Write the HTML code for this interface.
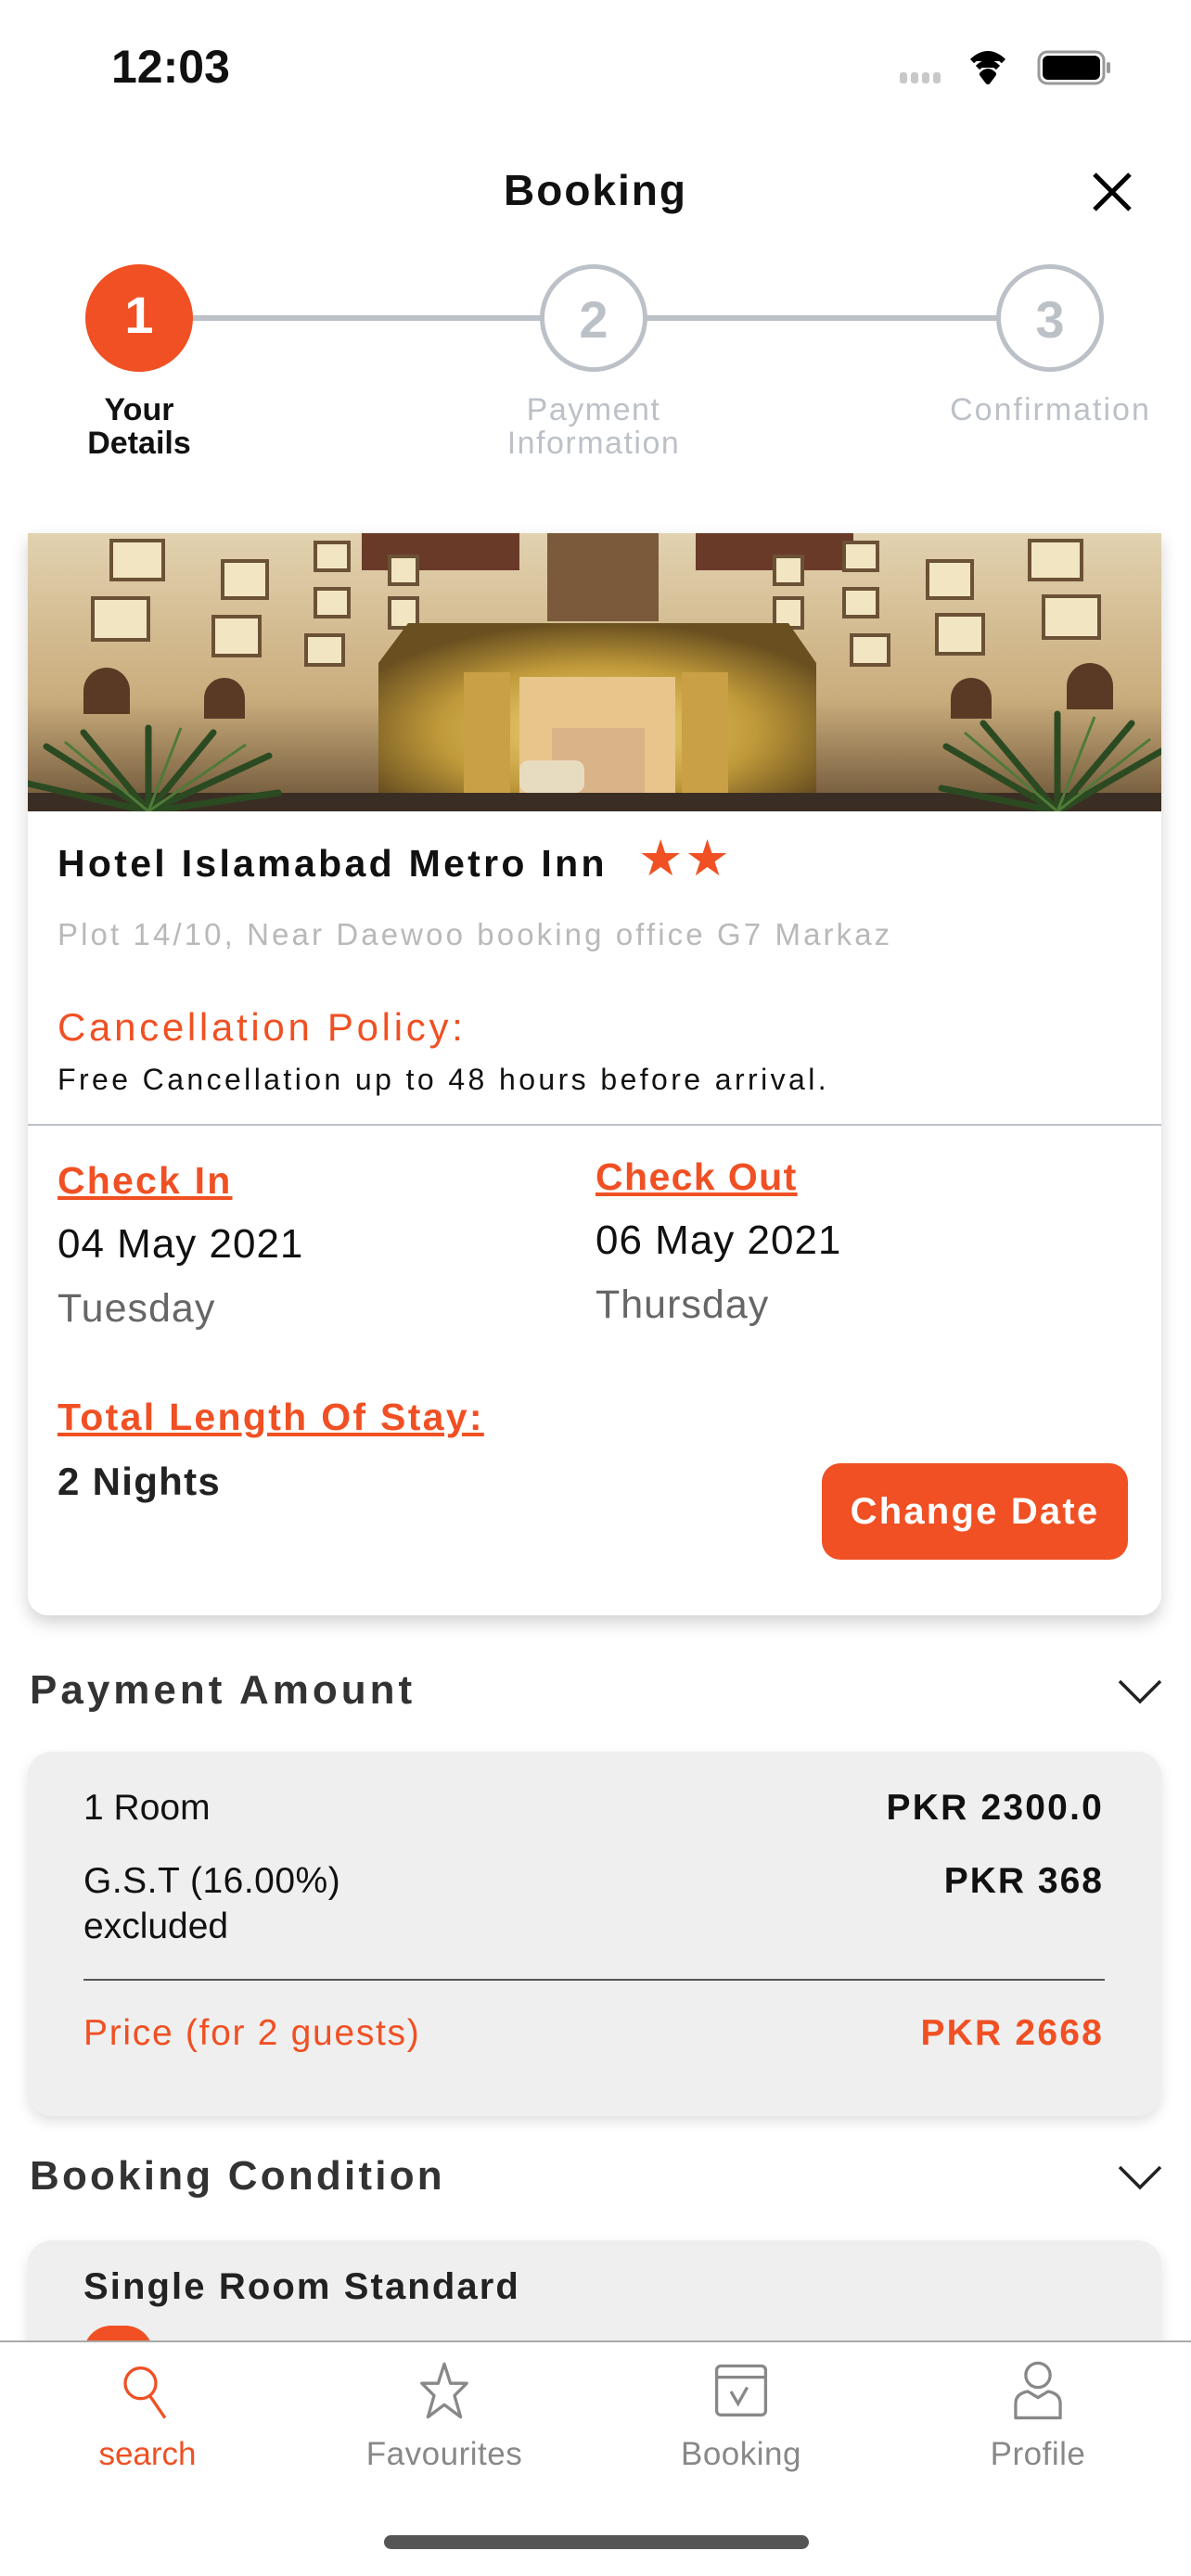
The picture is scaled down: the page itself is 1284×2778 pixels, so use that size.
<!DOCTYPE html>
<html><head><meta charset="utf-8"><style>
*{margin:0;padding:0;box-sizing:border-box}
body{width:1284px;height:2778px;background:#fff;position:relative;overflow:hidden;font-family:"Liberation Sans",sans-serif;color:#111}
.t{position:absolute;white-space:nowrap}
.or{color:#f05023}
.card{position:absolute;left:30px;top:575px;width:1222px;height:1167px;background:#fff;border-radius:0 0 22px 22px;box-shadow:0 8px 18px rgba(0,0,0,.18)}
.gcard{position:absolute;left:30px;width:1222px;background:#efefef;border-radius:26px;box-shadow:0 6px 14px rgba(0,0,0,.12)}
.circ{position:absolute;width:116px;height:116px;border-radius:50%;top:285px;text-align:center;line-height:110px;font-size:56px;font-weight:bold}
</style></head><body>
<div class="t" style="left:120px;top:44px;font-size:50px;line-height:56px;font-weight:bold;letter-spacing:0px">12:03</div>
<svg style="position:absolute;left:970px;top:50px" width="230" height="44" viewBox="0 0 230 44">
<g fill="#c8c8c8"><rect x="0" y="28" width="8" height="12" rx="3"/><rect x="12" y="28" width="8" height="12" rx="3"/><rect x="24" y="28" width="8" height="12" rx="3"/><rect x="36" y="28" width="8" height="12" rx="3"/></g>
<path d="M78 16 Q95 0 112 16 M84 23 Q95 12 106 23 M89 30 L95 38 L101 30 Q95 24 89 30Z" stroke="#000" stroke-width="6" fill="#000" stroke-linejoin="round"/>
<rect x="150" y="6" width="70" height="34" rx="9" fill="none" stroke="#999" stroke-width="3"/>
<rect x="154" y="10" width="62" height="26" rx="6" fill="#000"/>
<rect x="223" y="17" width="4" height="12" rx="2" fill="#999"/>
</svg>
<div class="t" style="left:0;width:1284px;text-align:center;top:180px;font-size:46px;line-height:50px;font-weight:bold;letter-spacing:2px">Booking</div>
<svg style="position:absolute;left:1176px;top:184px" width="46" height="46"><path d="M4 4L42 42M42 4L4 42" stroke="#000" stroke-width="5"/></svg>
<div style="position:absolute;left:200px;top:340px;width:880px;height:6px;background:#bcc1c8"></div>
<div class="circ" style="left:92px;background:#f05023;color:#fff">1</div>
<div class="circ" style="left:582px;border:5px solid #bcc1c8;color:#bcc1c8;background:#fff">2</div>
<div class="circ" style="left:1074px;border:5px solid #bcc1c8;color:#bcc1c8;background:#fff">3</div>
<div class="t" style="left:50px;width:200px;text-align:center;top:424px;font-size:34px;line-height:36px;font-weight:bold">Your<br>Details</div>
<div class="t" style="left:470px;width:340px;text-align:center;top:424px;font-size:34px;line-height:36px;color:#bcc1c8;letter-spacing:1.5px">Payment<br>Information</div>
<div class="t" style="left:990px;width:285px;text-align:center;top:424px;font-size:34px;line-height:36px;color:#bcc1c8;letter-spacing:2px">Confirmation</div>

<div class="card">
<svg width="1222" height="300" viewBox="0 0 1222 300" style="display:block">
<defs><linearGradient id="bg" x1="0" y1="0" x2="0" y2="1"><stop offset="0" stop-color="#e2d2b0"/><stop offset=".6" stop-color="#c9ac7c"/><stop offset="1" stop-color="#6a5235"/></linearGradient>
<radialGradient id="gl" cx=".5" cy=".6" r=".6"><stop offset="0" stop-color="#f6da80"/><stop offset=".6" stop-color="#c09a3a"/><stop offset="1" stop-color="#6a5020"/></radialGradient></defs>
<rect width="1222" height="300" fill="url(#bg)"/>
<rect x="560" y="0" width="120" height="95" fill="#7a5a3a"/>
<rect x="360" y="0" width="170" height="40" fill="#6a3a28"/><rect x="720" y="0" width="170" height="40" fill="#6a3a28"/>
<g fill="#f2e6c2" stroke="#6b5136" stroke-width="4">
<rect x="90" y="8" width="56" height="42"/><rect x="210" y="30" width="48" height="40"/><rect x="70" y="70" width="60" height="45"/><rect x="200" y="90" width="50" height="42"/><rect x="310" y="10" width="36" height="30"/><rect x="310" y="60" width="36" height="30"/><rect x="300" y="110" width="40" height="32"/><rect x="390" y="25" width="30" height="30"/><rect x="390" y="70" width="30" height="32"/>
<rect x="1080" y="8" width="56" height="42"/><rect x="970" y="30" width="48" height="40"/><rect x="1095" y="68" width="60" height="45"/><rect x="980" y="88" width="50" height="42"/><rect x="880" y="10" width="36" height="30"/><rect x="880" y="60" width="36" height="30"/><rect x="888" y="110" width="40" height="32"/><rect x="805" y="25" width="30" height="30"/><rect x="805" y="70" width="30" height="32"/>
</g>
<g fill="#5a3a24"><path d="M60 195v-25a25 25 0 0 1 50 0v25z"/><path d="M190 200v-22a22 22 0 0 1 44 0v22z"/><path d="M1120 190v-25a25 25 0 0 1 50 0v25z"/><path d="M995 200v-22a22 22 0 0 1 44 0v22z"/></g>
<path d="M378 140 L410 97 L820 97 L850 140 L850 290 L378 290Z" fill="url(#gl)"/>
<rect x="530" y="155" width="168" height="135" fill="#e8c58a"/>
<rect x="565" y="210" width="100" height="80" fill="#d9b488"/>
<rect x="470" y="150" width="50" height="140" fill="#c9a045"/><rect x="705" y="150" width="50" height="140" fill="#c9a045"/>
<rect x="530" y="245" width="70" height="35" rx="10" fill="#e8dcc0"/>
<rect x="0" y="280" width="1222" height="20" fill="#3a2e24"/>
<g stroke="#2c4a22" stroke-width="7" fill="none" stroke-linecap="round">
<path d="M130 300 L20 230 M130 300 L60 215 M130 300 L130 210 M130 300 L200 215 M130 300 L260 240 M130 300 L0 270 M130 300 L270 280"/>
<path d="M1110 300 L990 230 M1110 300 L1030 205 M1110 300 L1110 195 M1110 300 L1190 205 M1110 300 L1222 235 M1110 300 L985 275"/>
</g>
<g stroke="#4f7a38" stroke-width="3" fill="none"><path d="M130 300 L40 225 M130 300 L165 210 M130 300 L235 228"/><path d="M1110 300 L1010 215 M1110 300 L1150 198 M1110 300 L1210 222"/></g>
</svg>
</div>
<div class="t" style="left:62px;top:909px;font-size:41px;line-height:44px;font-weight:bold;letter-spacing:3.3px">Hotel Islamabad Metro Inn</div>
<div class="t or" style="left:688px;top:896px;font-size:54px;line-height:60px;letter-spacing:2px">★★</div>
<div class="t" style="left:62px;top:990px;font-size:33px;line-height:36px;color:#b9b9b9;letter-spacing:3.1px">Plot 14/10, Near Daewoo booking office G7 Markaz</div>
<div class="t or" style="left:62px;top:1085px;font-size:42px;line-height:46px;letter-spacing:3.7px">Cancellation Policy:</div>
<div class="t" style="left:62px;top:1146px;font-size:32px;line-height:36px;letter-spacing:3.4px">Free Cancellation up to 48 hours before arrival.</div>
<div style="position:absolute;left:30px;top:1212px;width:1222px;height:2px;background:#bcc1c8"></div>
<div class="t or" style="left:62px;top:1251px;font-size:41px;line-height:44px;font-weight:bold;text-decoration:underline;letter-spacing:2.2px">Check In</div>
<div class="t or" style="left:642px;top:1247px;font-size:41px;line-height:44px;font-weight:bold;text-decoration:underline;letter-spacing:1.4px">Check Out</div>
<div class="t" style="left:62px;top:1318px;font-size:44px;line-height:48px;letter-spacing:1px">04 May 2021</div>
<div class="t" style="left:642px;top:1314px;font-size:44px;line-height:48px;letter-spacing:1px">06 May 2021</div>
<div class="t" style="left:62px;top:1387px;font-size:43px;line-height:48px;color:#666;letter-spacing:1px">Tuesday</div>
<div class="t" style="left:642px;top:1383px;font-size:43px;line-height:48px;color:#666;letter-spacing:1px">Thursday</div>
<div class="t or" style="left:62px;top:1506px;font-size:41px;line-height:44px;font-weight:bold;text-decoration:underline;letter-spacing:2.3px">Total Length Of Stay:</div>
<div class="t" style="left:62px;top:1575px;font-size:42px;line-height:46px;font-weight:bold;color:#222;letter-spacing:1.3px">2 Nights</div>
<div style="position:absolute;left:886px;top:1578px;width:330px;height:104px;background:#f05023;border-radius:20px;color:#fff;font-size:40px;line-height:104px;text-align:center;font-weight:bold;letter-spacing:2.2px">Change Date</div>

<div class="t" style="left:32px;top:1799px;font-size:44px;line-height:48px;font-weight:bold;color:#333;letter-spacing:4px">Payment Amount</div>
<svg style="position:absolute;left:1205px;top:1810px" width="48" height="28"><path d="M2 3L24 25L46 3" stroke="#222" stroke-width="3.5" fill="none"/></svg>
<div class="gcard" style="top:1889px;height:393px"></div>
<div class="t" style="left:90px;top:1929px;font-size:39px;line-height:42px">1 Room</div>
<div class="t" style="right:94px;top:1929px;font-size:39px;line-height:42px;font-weight:bold;letter-spacing:2.2px">PKR 2300.0</div>
<div class="t" style="left:90px;top:2008px;font-size:39px;line-height:42px;letter-spacing:0.5px">G.S.T (16.00%)</div>
<div class="t" style="right:94px;top:2008px;font-size:39px;line-height:42px;font-weight:bold;letter-spacing:2px">PKR 368</div>
<div class="t" style="left:90px;top:2057px;font-size:39px;line-height:42px">excluded</div>
<div style="position:absolute;left:90px;top:2134px;width:1101px;height:2px;background:#555"></div>
<div class="t or" style="left:90px;top:2172px;font-size:39px;line-height:42px;letter-spacing:1.7px">Price (for 2 guests)</div>
<div class="t or" style="right:94px;top:2172px;font-size:39px;line-height:42px;font-weight:bold;letter-spacing:2.2px">PKR 2668</div>

<div class="t" style="left:32px;top:2323px;font-size:44px;line-height:48px;font-weight:bold;color:#333;letter-spacing:3.2px">Booking Condition</div>
<svg style="position:absolute;left:1205px;top:2334px" width="48" height="28"><path d="M2 3L24 25L46 3" stroke="#222" stroke-width="3.5" fill="none"/></svg>
<div class="gcard" style="top:2416px;height:200px"></div>
<div class="t" style="left:90px;top:2444px;font-size:40px;line-height:44px;font-weight:bold;color:#222;letter-spacing:2.1px">Single Room Standard</div>
<div style="position:absolute;left:90px;top:2508px;width:75px;height:60px;border-radius:30px;background:#f05023"></div>

<div style="position:absolute;left:0;top:2524px;width:1284px;height:254px;background:#fff;border-top:2px solid #aaa"></div>
<svg style="position:absolute;left:124px;top:2546px" width="66" height="66" viewBox="0 0 60 60"><circle cx="25" cy="22" r="15" stroke="#f05023" stroke-width="3" fill="none"/><path d="M34 34L49 56" stroke="#f05023" stroke-width="3"/></svg>
<svg style="position:absolute;left:446px;top:2546px" width="66" height="66" viewBox="0 0 60 60"><path d="M30 3L36 22L52 22L40 34L46 55L30 43L14 55L20 34L8 22L24 22Z" stroke="#888" stroke-width="3" fill="none" stroke-linejoin="round"/></svg>
<svg style="position:absolute;left:766px;top:2548px" width="66" height="62" viewBox="0 0 60 56"><rect x="6" y="3" width="48" height="48" rx="4" stroke="#888" stroke-width="3" fill="none"/><path d="M6 14H54M20 28L27 40L36 24" stroke="#888" stroke-width="3" fill="none"/></svg>
<svg style="position:absolute;left:1086px;top:2544px" width="66" height="70" viewBox="0 0 60 64"><circle cx="30" cy="16" r="12" stroke="#888" stroke-width="3" fill="none"/><path d="M8 58V44Q8 34 20 32L30 38L40 32Q52 34 52 44V58Z" stroke="#888" stroke-width="3" fill="none" stroke-linejoin="round"/></svg>
<div class="t or" style="left:59px;width:200px;text-align:center;top:2628px;font-size:35px;line-height:38px">search</div>
<div class="t" style="left:379px;width:200px;text-align:center;top:2628px;font-size:35px;line-height:38px;color:#888;letter-spacing:0.5px">Favourites</div>
<div class="t" style="left:699px;width:200px;text-align:center;top:2628px;font-size:35px;line-height:38px;color:#888;letter-spacing:0.5px">Booking</div>
<div class="t" style="left:1019px;width:200px;text-align:center;top:2628px;font-size:35px;line-height:38px;color:#888;letter-spacing:0.5px">Profile</div>
<div style="position:absolute;left:414px;top:2734px;width:458px;height:15px;border-radius:8px;background:#555"></div>
</body></html>
